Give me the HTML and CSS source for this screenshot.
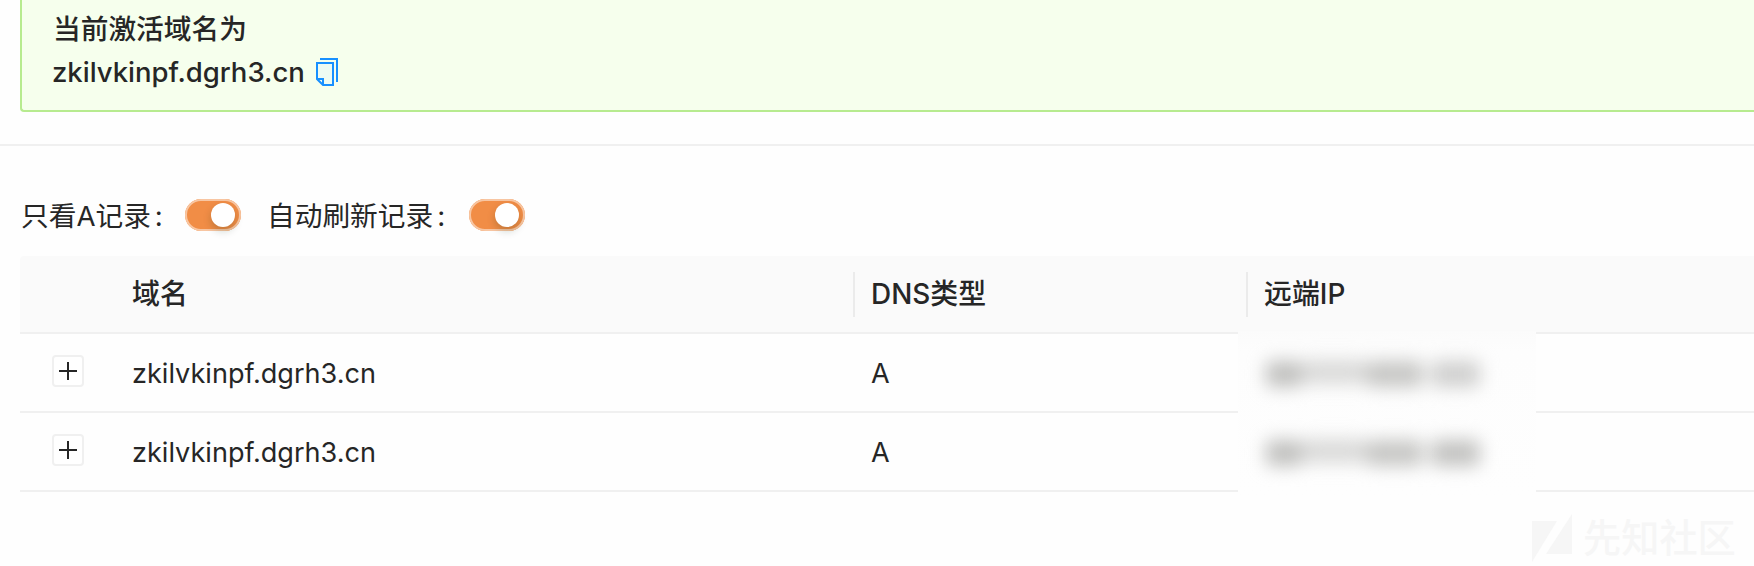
FILE: index.html
```html
<!DOCTYPE html>
<html lang="zh-CN">
<head>
<meta charset="utf-8">
<title>DNS</title>
<link rel="stylesheet" href="styles.css">
</head>
<body>
<div class="page">
  <section class="alert">
    <div class="alert-title">当前激活域名为</div>
    <div class="alert-domain"><span class="alert-name">zkilvkinpf.dgrh3.cn</span>
      <svg class="copy" width="22" height="28" viewBox="0 0 22 28" fill="none" stroke="#1890ff" stroke-width="2">
        <path d="M4 1H21V24"/>
        <path d="M1 5H17V27H7L1 21Z" fill="#eefbf2"/>
        <path d="M1 21H7V27"/>
      </svg>
    </div>
  </section>
  <div class="divider"></div>
  <div class="filters">
    <span class="label label-a">只看A记录<i class="colon">:</i></span>
    <span class="switch"><span class="knob"></span></span>
    <span class="label label-auto">自动刷新记录<i class="colon">:</i></span>
    <span class="switch"><span class="knob"></span></span>
  </div>
  <div class="table">
    <div class="row head">
      <div></div>
      <div class="cell">域名</div>
      <div class="cell sep">DNS类型</div>
      <div class="cell sep">远端IP</div>
    </div>
    <div class="row">
      <div class="expand"><span class="plus"></span></div>
      <div class="cell">zkilvkinpf.dgrh3.cn</div>
      <div class="cell">A</div>
      <div class="cell"></div>
    </div>
    <div class="row">
      <div class="expand"><span class="plus"></span></div>
      <div class="cell">zkilvkinpf.dgrh3.cn</div>
      <div class="cell">A</div>
      <div class="cell"></div>
    </div>
    <div class="mask">
      <div class="smudge"><b class="s1"></b><b class="s2"></b><b class="s3"></b><b class="s4"></b></div>
      <div class="smudge"><b class="s1"></b><b class="s2"></b><b class="s3"></b><b class="s4 dark"></b></div>
    </div>
  </div>
  <div class="watermark">
    <svg width="40" height="48" viewBox="0 0 40 48" fill="#f6f6f6"><path d="M0 7H25L0 48Z"/><path d="M40 0V40H14Z"/></svg>
    <span>先知社区</span>
  </div>
</div>
</body>
</html>
```
FILE: styles.css
```css
* { box-sizing: border-box; }
body {
  margin: 0;
  background: #fefefe;
  color: #262626;
  font-family: Inter, "Noto Sans CJK SC", sans-serif;
  font-size: 27.7px;
  line-height: 44px;
}
.page { position: relative; width: 1754px; height: 566px; overflow: hidden; }
.alert {
  height: 112px;
  margin-left: 20px;
  padding: 7px 0 0 31px;
  border-left: 2px solid #b7eb8f;
  border-bottom: 2px solid #b7eb8f;
  border-bottom-left-radius: 4px;
  background: #f6ffed;
  font-weight: 500;
}
.alert-title { height: 43px; }
.alert-domain { display: flex; align-items: center; height: 44px; }
.alert-name { width: 264px; margin-left: -1px; font-size: 27.5px; }
.divider { height: 2px; margin-top: 32px; background: #f0f0f0; }
.filters { display: flex; align-items: center; height: 110px; padding: 28px 0 0 21px; }
.label { display: flex; padding-top: 1px; white-space: nowrap; }
.label-a { width: 164px; }
.label-auto { width: 202px; margin-left: 26px; }
.colon { font-style: normal; margin-left: 4px; }
.switch {
  width: 56px;
  height: 32px;
  flex: none;
  padding: 4px 6px 0 0;
  border-radius: 16px;
  background: #f18d46;
  box-shadow: inset 0 0 0 2px #f8c6a2;
}
.knob {
  display: block;
  width: 24px;
  height: 24px;
  margin-left: auto;
  border-radius: 50%;
  background: #fff;
  box-shadow: 0 4px 8px rgba(0, 35, 11, .2);
}
.table { position: relative; margin-left: 20px; }
.row {
  display: grid;
  grid-template-columns: 97px 736px 393px 1fr;
  align-items: center;
  height: 79px;
  border-bottom: 2px solid #f0f0f0;
}
.head {
  height: 78px;
  background: #fafafa;
  border-top-left-radius: 4px;
  font-weight: 500;
}
.cell { padding-top: 2px; padding-left: 15px; font-size: 27.1px; white-space: nowrap; }
.head .cell { padding-top: 0; font-size: 27.9px; }
.head .sep { padding-left: 0; }
.sep { display: flex; align-items: center; }
.sep::before { content: ""; width: 2px; height: 45px; margin-right: 16px; background: #ebebeb; }
.row:not(.head) .cell + .cell { padding-left: 18px; }
.expand { padding-left: 32px; }
.plus {
  display: grid;
  place-items: center;
  width: 32px;
  height: 32px;
  margin-top: -3px;
  border: 2px solid #f0f0f0;
  border-radius: 4px;
  background:
    linear-gradient(#262626, #262626) center / 18px 2px no-repeat,
    linear-gradient(#262626, #262626) center / 2px 18px no-repeat,
    #fff;
}
.mask {
  position: absolute;
  left: 1218px;
  top: 75px;
  width: 298px;
  height: 165px;
  background: linear-gradient(#fbfbfb, #fdfdfd 20px, #fefefe);
}
.smudge { position: relative; height: 79px; filter: blur(9px); }
.smudge b { position: absolute; border-radius: 6px; }
.s1 { left: 28px; top: 30px; width: 36px; height: 26px; background: #c0c0be; }
.s2 { left: 64px; top: 29px; width: 64px; height: 24px; background: #d9d9d8; }
.s3 { left: 128px; top: 30px; width: 57px; height: 26px; background: #c6c6c4; }
.s4 { left: 193px; top: 30px; width: 49px; height: 26px; background: #cfcfce; }
.s4.dark { background: #c2c2c0; }
.watermark {
  position: absolute;
  left: 1532px;
  top: 514px;
  display: flex;
  gap: 11px;
  height: 48px;
  color: #f6f6f6;
  font-size: 38.2px;
  font-weight: 500;
  line-height: 48px;
  white-space: nowrap;
}
```
